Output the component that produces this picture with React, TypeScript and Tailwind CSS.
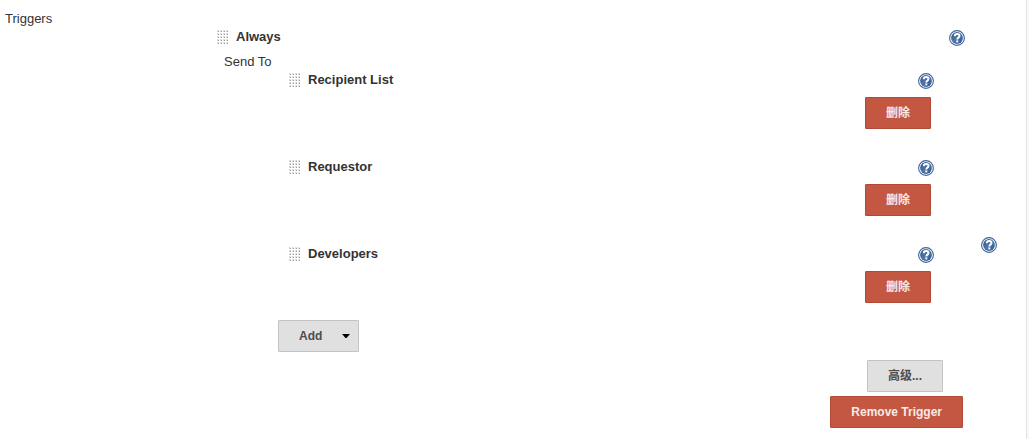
import type { ReactNode } from "react";

const recipients = ["Recipient List", "Requestor", "Developers"];

const dotCols = [0, 3, 6, 9];
const dotRows = [0, 3, 6, 9, 12];

function DragHandle() {
  return (
    <svg width="12" height="15" viewBox="0 0 12 15" className="shrink-0 cursor-move" shapeRendering="crispEdges" aria-hidden="true">
      {dotRows.map((y) =>
        dotCols.map((x) => (
          <g key={`${x}-${y}`}>
            <rect x={x} y={y} width="2" height="2" fill="#dedede" />
            <rect x={x + 1} y={y + 1} width="1" height="1" fill="#9a9a9a" />
          </g>
        ))
      )}
    </svg>
  );
}

function HelpLink({ topic }: { topic: string }) {
  return (
    <a href="#help" aria-label={`Help for ${topic}`} className="block size-4 shrink-0">
      <svg width="16" height="16" viewBox="0 0 16 16">
        <defs>
          <linearGradient id="help-fill" x1="0" y1="0" x2="1" y2="1">
            <stop offset="0" stopColor="#2c5083" />
            <stop offset="0.5" stopColor="#4f76aa" />
            <stop offset="1" stopColor="#2b5088" />
          </linearGradient>
        </defs>
        <circle cx="8" cy="8" r="7.4" fill="#fff" stroke="#3c659c" strokeWidth="1.1" />
        <circle cx="8" cy="8" r="5.9" fill="url(#help-fill)" />
        <path d="M5.7 6.3C5.7 4.7 6.7 4 8.1 4S10.5 4.9 10.5 6.1C10.5 7.7 8.3 7.6 8.3 9.4" fill="none" stroke="#fff" strokeWidth="1.9" />
        <rect x="7.3" y="10.4" width="2" height="2" fill="#fff" />
      </svg>
    </a>
  );
}

function ItemHeader({ title }: { title: string }) {
  return (
    <div className="flex h-4 items-start">
      <DragHandle />
      <b className="ml-[7px] flex-1 leading-[14px]">{title}</b>
      <HelpLink topic={title} />
    </div>
  );
}

function DangerButton({ children }: { children: ReactNode }) {
  return (
    <button
      type="button"
      className="h-8 rounded-[1px] border border-[#b04a35] bg-[#c45742] px-5 text-xs font-bold text-[#f8e9e6]"
    >
      {children}
    </button>
  );
}

function Recipient({ name }: { name: string }) {
  return (
    <li>
      <ItemHeader title={name} />
      <div className="mt-2 flex justify-end pr-[3px]">
        <DangerButton>删除</DangerButton>
      </div>
    </li>
  );
}

export default function App() {
  return (
    <div className="min-h-screen bg-[#f9f9f9] pr-[2px] font-['Liberation_Sans','Noto_Sans_CJK_SC',sans-serif] text-[13px] leading-4 text-[#333]">
      <div className="flex min-h-screen border-r border-[#e2e2e2] bg-white pr-[29px] pb-[11px]">
        <div className="w-[217px] shrink-0 pt-[11px] pl-[5px]">Triggers</div>

        <section className="flex-1 pt-[30px]">
          <ItemHeader title="Always" />

          <div className="mt-2 pl-[7px]">Send To</div>

          <ul className="mt-[3px] flex flex-col gap-[31px] pr-[31px] pl-[72px]">
            {recipients.map((name) => (
              <Recipient key={name} name={name} />
            ))}
          </ul>

          <div className="mt-[17px] pl-[61px]">
            <button
              type="button"
              className="flex h-8 items-center rounded-[1px] border border-[#c4c4c4] bg-[#e0e0e0] pr-2 pl-5 text-xs font-bold text-[#4d4d4d]"
            >
              Add
              <svg width="8" height="4" viewBox="0 0 8 4" className="ml-5" aria-hidden="true">
                <path d="M0 0H8L4.5 4H3.5Z" fill="#000" />
              </svg>
            </button>
          </div>

          <div className="mt-2 flex flex-col items-end gap-1 pr-[2px]">
            <button
              type="button"
              className="mr-5 h-8 rounded-[1px] border border-[#c4c4c4] bg-[#e0e0e0] px-5 text-xs font-bold text-[#4d4d4d]"
            >
              高级...
            </button>
            <DangerButton>Remove Trigger</DangerButton>
          </div>
        </section>

        <div className="shrink-0 pt-[237px] pl-4">
          <HelpLink topic="Triggers" />
        </div>
      </div>
    </div>
  );
}
